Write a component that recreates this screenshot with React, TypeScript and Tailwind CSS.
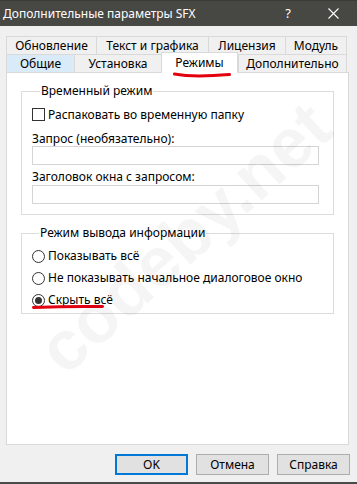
import React from 'react';

const font = { fontFamily: '"Noto Sans", "Liberation Sans", sans-serif' };

const Tab: React.FC<{ label: string; w: string; blue?: boolean; last?: boolean }> = ({ label, w, blue, last }) => (
  <div
    className={`${w} h-full flex items-center justify-center border-t border-l border-[#d9d9d9] ${last ? 'border-r' : ''} ${blue ? 'bg-[#d9eaf9]' : ''}`}
  >
    {label}
  </div>
);

const Radio: React.FC<{ label: string; checked?: boolean }> = ({ label, checked }) => (
  <div className="h-[22px] flex items-center">
    <span className="w-[13px] h-[13px] rounded-full border border-[#333] bg-white flex items-center justify-center">
      {checked && <span className="w-[7px] h-[7px] rounded-full bg-[#333]" />}
    </span>
    <span className="ml-[3px]">{label}</span>
  </div>
);

export default function App() {
  return (
    <div className="relative w-[357px] h-[484px] bg-[#f0f0f0] flex flex-col text-[12px] text-black overflow-hidden" style={font}>
      {/* Title bar */}
      <div className="h-[26px] bg-[#474743] border-t border-[#3a3a37] flex items-center text-white shrink-0">
        <span className="ml-[3px] leading-none">Дополнительные параметры SFX</span>
        <span className="ml-auto mr-[37px] text-[13px] leading-none">?</span>
        <svg className="mr-[18px]" width="11" height="11" viewBox="0 0 11 11">
          <path d="M0.5 0.5 L10.5 10.5 M10.5 0.5 L0.5 10.5" stroke="white" strokeWidth="1.1" />
        </svg>
      </div>

      <div className="pl-[6px] pt-[10px]">
        {/* Tabs */}
        <div className="flex h-[18px]">
          <Tab label="Обновление" w="w-[90px]" />
          <Tab label="Текст и графика" w="w-[112px]" />
          <Tab label="Лицензия" w="w-[77px]" />
          <Tab label="Модуль" w="w-[62px]" last />
        </div>
        <div className="flex h-[18px]">
          <Tab label="Общие" w="w-[68px]" blue />
          <Tab label="Установка" w="w-[87px]" />
          <div className="relative z-10 w-[77px] h-[21px] self-end -mb-[1px] bg-white border-t border-l border-r border-[#d9d9d9] flex items-center justify-center pb-[1px]">
            Режимы
            <svg className="absolute left-[11px] top-[19px]" width="58" height="7" viewBox="0 0 58 7">
              <path d="M1.5 2 Q 20 5.5 56.5 2.5" stroke="#e3000f" strokeWidth="3" fill="none" strokeLinecap="round" />
            </svg>
          </div>
          <Tab label="Дополнительно" w="w-[109px]" last />
        </div>

        {/* Panel */}
        <div className="w-[343px] h-[373px] bg-white border border-[#d9d9d9] pt-[10px] px-[14px]">
          <fieldset className="border border-[#dcdcdc] pb-[10px] pl-[10px]">
            <legend className="ml-[8px] px-[1px] leading-[16px]">Временный режим</legend>
            <div className="mt-[9px] h-[13px] flex items-center">
              <span className="w-[13px] h-[13px] border border-[#333] bg-white" />
              <span className="ml-[3px]">Распаковать во временную папку</span>
            </div>
            <div className="mt-[11px] leading-[14px]">Запрос (необязательно):</div>
            <div className="w-[287px] h-[19px] border border-[#d4d4d4] bg-white" />
            <div className="mt-[5px] leading-[14px]">Заголовок окна с запросом:</div>
            <div className="mt-[1px] w-[287px] h-[19px] border border-[#d4d4d4] bg-white" />
          </fieldset>

          <fieldset className="mt-[10px] border border-[#dcdcdc] pb-[2px] pl-[10px]">
            <legend className="ml-[7px] px-[1px] leading-[16px]">Режим вывода информации</legend>
            <div className="mt-[4px]">
              <Radio label="Показывать всё" />
              <Radio label="Не показывать начальное диалоговое окно" />
              <div className="relative">
                <Radio label="Скрыть всё" checked />
                <svg className="absolute left-0 top-[15px]" width="72" height="6" viewBox="0 0 72 6">
                  <path d="M1.5 3.5 Q 36 2 70.5 2.5" stroke="#e3000f" strokeWidth="3" fill="none" strokeLinecap="round" />
                </svg>
              </div>
            </div>
          </fieldset>
        </div>
      </div>

      {/* Buttons */}
      <div className="flex justify-end gap-[8px] pr-[7px] mt-[9px]">
        <button className="w-[73px] h-[21px] bg-[#e1e1e1] border-2 border-[#0078d7] flex items-center justify-center">OK</button>
        <button className="w-[73px] h-[21px] bg-[#e1e1e1] border border-[#adadad] flex items-center justify-center">Отмена</button>
        <button className="w-[73px] h-[21px] bg-[#e1e1e1] border border-[#adadad] flex items-center justify-center">Справка</button>
      </div>

      <div className="mt-auto h-[2px] bg-[#4a4a4a]" />

      {/* Watermark */}
      <div className="pointer-events-none absolute left-[185px] top-[238px] -translate-x-1/2 -translate-y-1/2 -rotate-[42deg] text-[70px] font-bold text-black/[0.04] whitespace-nowrap" style={{ fontFamily: '"Liberation Sans", sans-serif' }}>
        codeby.net
      </div>
    </div>
  );
}
